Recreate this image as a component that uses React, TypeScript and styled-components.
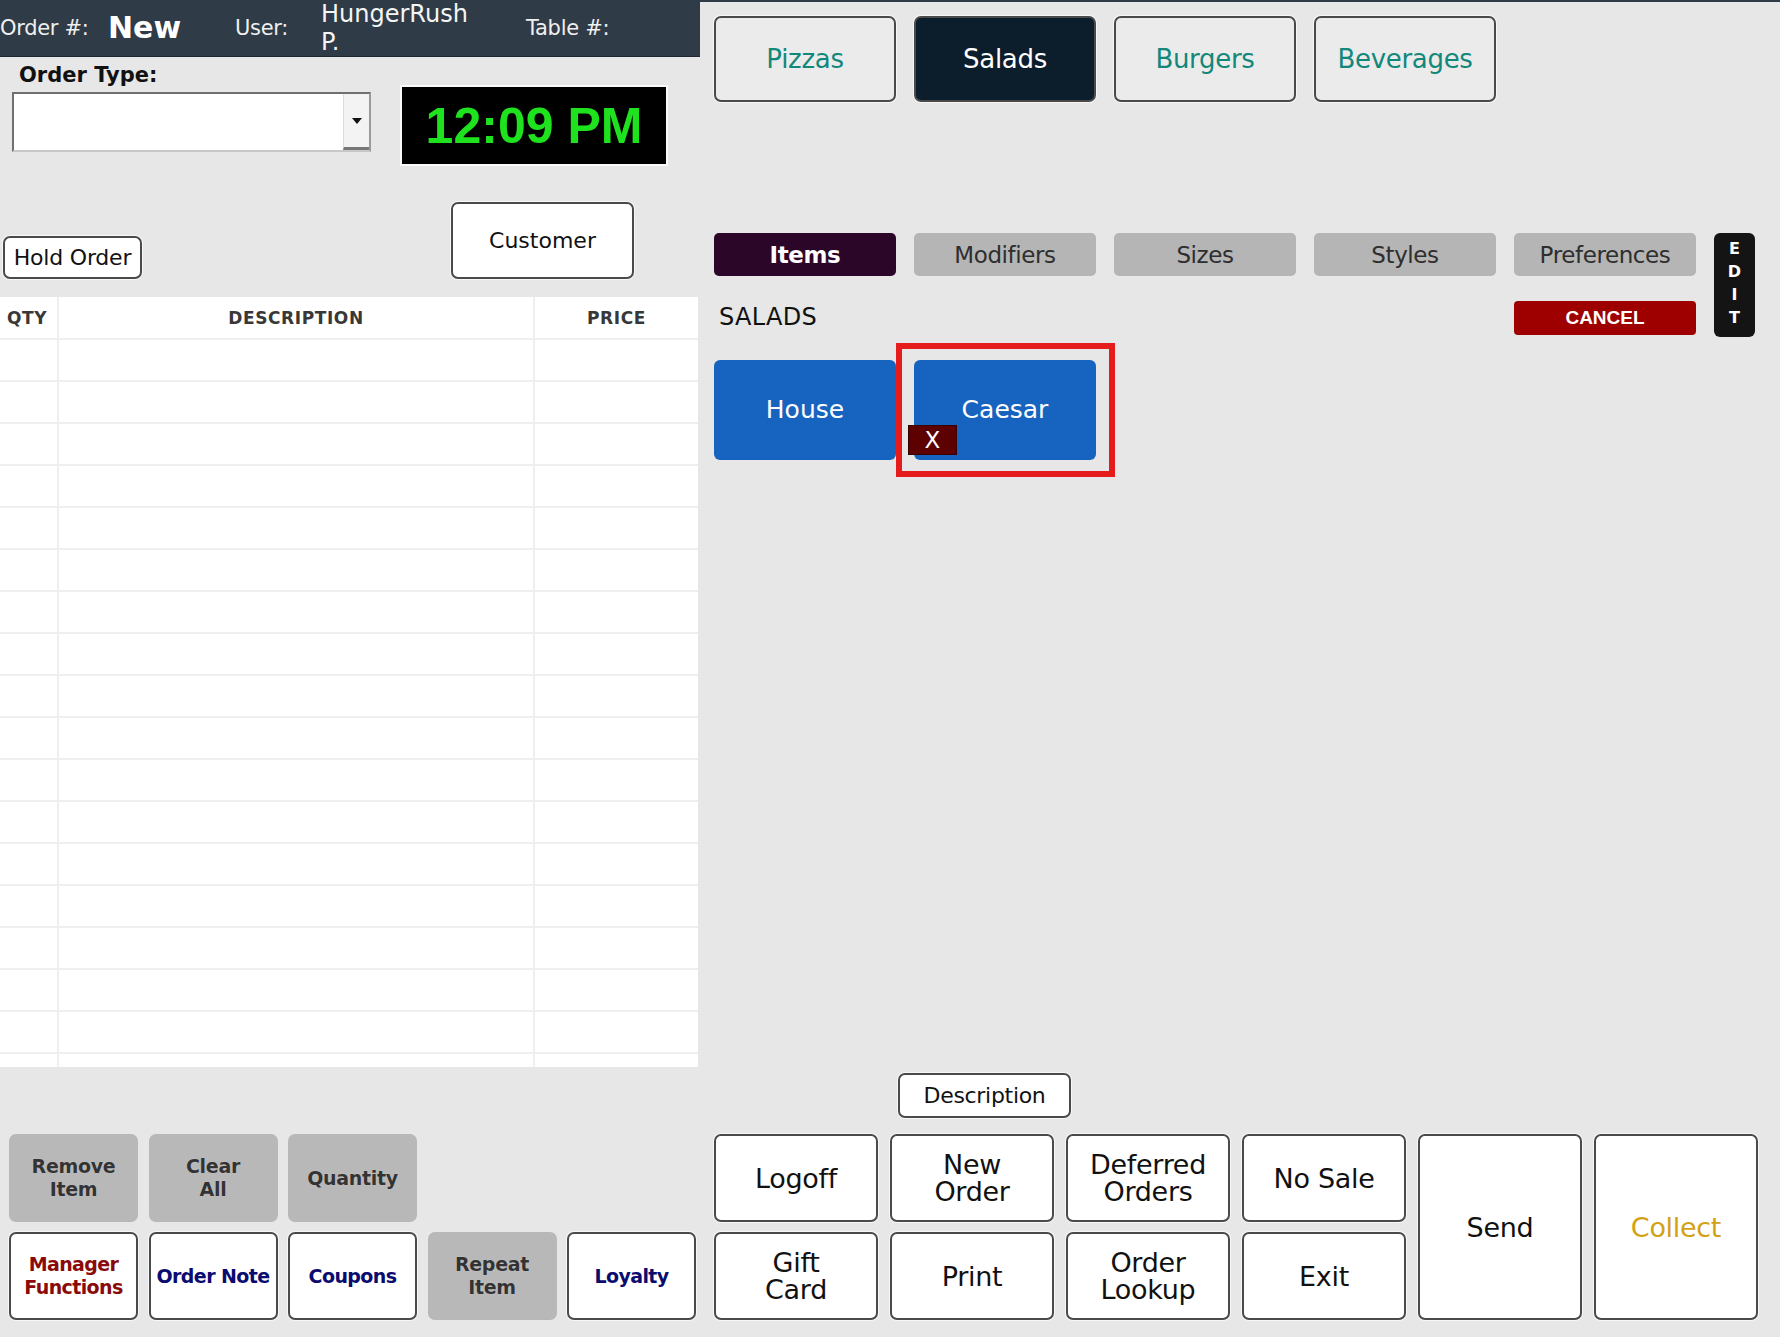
import React from "react";
import styled, { createGlobalStyle, css } from "styled-components";

const SANS = `"DejaVu Sans", "Noto Sans", sans-serif`;

const GlobalStyle = createGlobalStyle`
  html, body {
    margin: 0;
    padding: 0;
    background: #e7e7e7;
  }
  body {
    font-family: ${SANS};
    color: #111;
  }
  * { box-sizing: border-box; }
`;

const categories = [
  { label: "Pizzas" },
  { label: "Salads", active: true },
  { label: "Burgers" },
  { label: "Beverages" },
];

const tabs = [
  { label: "Items", active: true },
  { label: "Modifiers" },
  { label: "Sizes" },
  { label: "Styles" },
  { label: "Preferences" },
];

type Kind = "gray" | "red" | "navy";

const leftButtons: { label: string; kind: Kind; col?: number }[] = [
  { label: "Remove\nItem", kind: "gray" },
  { label: "Clear\nAll", kind: "gray" },
  { label: "Quantity", kind: "gray" },
  { label: "Manager\nFunctions", kind: "red", col: 1 },
  { label: "Order Note", kind: "navy" },
  { label: "Coupons", kind: "navy" },
  { label: "Repeat\nItem", kind: "gray" },
  { label: "Loyalty", kind: "navy" },
];

const actions = [
  "Logoff",
  "New\nOrder",
  "Deferred\nOrders",
  "No Sale",
  "Gift\nCard",
  "Print",
  "Order\nLookup",
  "Exit",
];

const App = () => {
  const rows = Array.from({ length: 19 });
  return (
    <>
      <GlobalStyle />
      <Page>
        <LeftPanel>
          <HeaderBar>
            <HeadLabel>Order #:</HeadLabel>
            <OrderNo>New</OrderNo>
            <HeadLabel>User:</HeadLabel>
            <UserName>
              HungerRush
              <br />
              P.
            </UserName>
            <HeadLabel>Table #:</HeadLabel>
          </HeaderBar>

          <TopForm>
            <FieldLabel>Order Type:</FieldLabel>
            <SelectBox>
              <SelectArrow>
                <svg width="10" height="6" viewBox="0 0 10 6">
                  <path d="M0 0 L10 0 L5 6 Z" fill="#111" />
                </svg>
              </SelectArrow>
            </SelectBox>
            <Clock>12:09 PM</Clock>
          </TopForm>

          <ActionRow>
            <HoldButton>Hold Order</HoldButton>
            <CustomerButton>Customer</CustomerButton>
          </ActionRow>

          <OrderTable>
            <TableRow $head>
              <Cell>QTY</Cell>
              <Cell $center>DESCRIPTION</Cell>
              <Cell $center>PRICE</Cell>
            </TableRow>
            {rows.map((_, i) => (
              <TableRow key={i}>
                <Cell />
                <Cell />
                <Cell />
              </TableRow>
            ))}
          </OrderTable>

          <LeftGrid>
            {leftButtons.map((b) => (
              <LeftButton key={b.label} $kind={b.kind} $col={b.col}>
                {b.label}
              </LeftButton>
            ))}
          </LeftGrid>
        </LeftPanel>

        <RightPanel>
          <CategoryRow>
            {categories.map((c) => (
              <CategoryButton key={c.label} $active={c.active}>
                {c.label}
              </CategoryButton>
            ))}
          </CategoryRow>

          <TabGrid>
            {tabs.map((t) => (
              <TabButton key={t.label} $active={t.active}>
                {t.label}
              </TabButton>
            ))}
            <EditButton>
              <span>E</span>
              <span>D</span>
              <span>I</span>
              <span>T</span>
            </EditButton>
            <SectionTitle>SALADS</SectionTitle>
            <CancelButton>CANCEL</CancelButton>
          </TabGrid>

          <ItemGrid>
            <ItemButton>House</ItemButton>
            <ItemButton $selected>
              Caesar
              <RemoveBadge>X</RemoveBadge>
            </ItemButton>
          </ItemGrid>

          <BottomArea>
            <DescriptionButton>Description</DescriptionButton>
            <ActionGrid>
              {actions.map((a) => (
                <ActionButton key={a}>{a}</ActionButton>
              ))}
              <ActionButton $col={5}>Send</ActionButton>
              <ActionButton $col={6} $gold>
                Collect
              </ActionButton>
            </ActionGrid>
          </BottomArea>
        </RightPanel>
      </Page>
    </>
  );
};

export default App;

const Page = styled.div`
  display: grid;
  grid-template-columns: 700px 1fr;
  width: 1780px;
  height: 1337px;
  overflow: hidden;
  background: #e7e7e7;
`;

const LeftPanel = styled.div`
  display: flex;
  flex-direction: column;
  padding-bottom: 17px;
`;

const HeaderBar = styled.div`
  display: grid;
  grid-template-columns: 108px 127px 86px 205px auto;
  align-items: center;
  height: 57px;
  background: #2f3b46;
  color: #fff;
  overflow: hidden;
  border-bottom: 1px solid #1f2830;
`;

const HeadLabel = styled.span`
  font-size: 21px;
  color: #f0f0f0;
  letter-spacing: -0.3px;
`;

const OrderNo = styled.span`
  font-size: 30px;
  font-weight: bold;
  margin-top: -2px;
`;

const UserName = styled.div`
  align-self: start;
  font-size: 24px;
  line-height: 28px;
  color: #f5f5f5;
  white-space: nowrap;
`;

const TopForm = styled.div`
  display: grid;
  grid-template-columns: 359px 264px;
  grid-template-rows: 26px 60px;
  column-gap: 31px;
  row-gap: 4px;
  padding: 5px 0 0 12px;
`;

const FieldLabel = styled.div`
  grid-column: 1 / 3;
  padding-left: 7px;
  font-size: 21px;
  font-weight: 600;
  line-height: 26px;
`;

const SelectBox = styled.div`
  display: flex;
  justify-content: flex-end;
  background: #fff;
  border: 2px solid #707070;
  border-right-color: #9a9a9a;
  border-bottom-color: #c8c8c8;
`;

const SelectArrow = styled.div`
  display: flex;
  align-items: center;
  justify-content: center;
  width: 26px;
  background: #f3f3f3;
  border-left: 1px solid #dcdcdc;
  border-bottom: 3px solid #777;
`;

const Clock = styled.div`
  align-self: start;
  margin-top: -5px;
  height: 77px;
  display: flex;
  align-items: center;
  justify-content: center;
  background: #000;
  color: #1fe21f;
  font-family: "Liberation Sans", Arial, sans-serif;
  font-weight: bold;
  font-size: 50px;
  outline: 2px solid #fafafa;
`;

const buttonBase = css`
  display: flex;
  align-items: center;
  justify-content: center;
  text-align: center;
  white-space: pre-line;
  background: #fff;
  border: 2px solid #4a4a4a;
  border-radius: 7px;
  box-shadow: 0 0 0 1px #f7f7f7;
`;

const ActionRow = styled.div`
  display: flex;
  align-items: flex-end;
  margin-top: 50px;
  padding-left: 3px;
`;

const HoldButton = styled.div`
  ${buttonBase};
  width: 139px;
  height: 43px;
  font-size: 22px;
  letter-spacing: -0.2px;
`;

const CustomerButton = styled.div`
  ${buttonBase};
  width: 183px;
  height: 77px;
  margin-left: 309px;
  font-size: 22px;
`;

const OrderTable = styled.div`
  margin-top: 18px;
  width: 698px;
  height: 770px;
  overflow: hidden;
  background: #fff;
`;

const TableRow = styled.div<{ $head?: boolean }>`
  display: grid;
  grid-template-columns: 59px 476px 163px;
  height: ${(p) => (p.$head ? "43px" : "42px")};
  border-bottom: 2px solid #efefef;
  font-size: 17px;
  font-weight: bold;
  letter-spacing: 0.6px;
  color: #383838;
`;

const Cell = styled.div<{ $center?: boolean }>`
  display: flex;
  align-items: center;
  justify-content: ${(p) => (p.$center ? "center" : "flex-start")};
  padding-left: ${(p) => (p.$center ? "0" : "7px")};
  border-right: 2px solid #efefef;
  &:last-child {
    border-right: none;
  }
`;

const LeftGrid = styled.div`
  display: grid;
  grid-template-columns: repeat(5, 129px);
  grid-template-rows: 88px 88px;
  column-gap: 10.5px;
  row-gap: 10px;
  margin-top: auto;
  padding-left: 9px;
`;

const kindColor = { gray: "#333", red: "#8a0a0a", navy: "#0b0b70" };

const LeftButton = styled.div<{ $kind: Kind; $col?: number }>`
  ${buttonBase};
  font-size: 19px;
  line-height: 23px;
  font-weight: bold;
  letter-spacing: -0.6px;
  color: ${(p) => kindColor[p.$kind]};
  ${(p) => p.$col && `grid-column: ${p.$col};`}
  ${(p) =>
    p.$kind === "gray" &&
    css`
      background: #b8b8b8;
      border-color: #b8b8b8;
      box-shadow: none;
      font-weight: 600;
      letter-spacing: -0.3px;
      text-shadow: 0 0 1px rgba(255, 255, 255, 0.5);
    `}
`;

const RightPanel = styled.div`
  display: flex;
  flex-direction: column;
  padding: 14px 0 17px 14px;
  border-top: 2px solid #2f3b46;
`;

const CategoryRow = styled.div`
  display: flex;
  gap: 18px;
`;

const CategoryButton = styled.div<{ $active?: boolean }>`
  ${buttonBase};
  width: 182px;
  height: 86px;
  background: ${(p) => (p.$active ? "#0c1d2c" : "#ebebeb")};
  color: ${(p) => (p.$active ? "#fff" : "#12887b")};
  font-size: 26px;
  letter-spacing: -0.3px;
`;

const TabGrid = styled.div`
  display: grid;
  grid-template-columns: repeat(5, 182px) 41px;
  grid-template-rows: 43px 61px;
  column-gap: 18px;
  margin-top: 131px;
`;

const TabButton = styled.div<{ $active?: boolean }>`
  display: flex;
  align-items: center;
  justify-content: center;
  border-radius: 5px;
  background: ${(p) => (p.$active ? "#2c0628" : "#b5b5b5")};
  color: ${(p) => (p.$active ? "#fff" : "#2e2e2e")};
  font-size: 23px;
  letter-spacing: -0.4px;
  font-weight: ${(p) => (p.$active ? "600" : "normal")};
`;

const EditButton = styled.div`
  grid-column: 6;
  grid-row: 1 / 3;
  display: flex;
  flex-direction: column;
  align-items: center;
  justify-content: center;
  background: #141414;
  border-radius: 6px;
  color: #fff;
  font-weight: bold;
  font-size: 16px;
  line-height: 23px;
  padding-bottom: 4px;
`;

const SectionTitle = styled.div`
  grid-column: 1 / 3;
  grid-row: 2;
  align-self: center;
  padding: 20px 0 0 5px;
  font-size: 24px;
  letter-spacing: 0.3px;
`;

const CancelButton = styled.div`
  grid-column: 5;
  grid-row: 2;
  align-self: end;
  height: 34px;
  margin-bottom: 2px;
  display: flex;
  align-items: center;
  justify-content: center;
  background: #9e0000;
  border-radius: 4px;
  color: #fff;
  font-family: "Liberation Sans", Arial, sans-serif;
  font-weight: bold;
  font-size: 19px;
`;

const ItemGrid = styled.div`
  display: flex;
  gap: 18px;
  margin-top: 23px;
`;

const ItemButton = styled.div<{ $selected?: boolean }>`
  position: relative;
  display: flex;
  align-items: center;
  justify-content: center;
  width: 182px;
  height: 100px;
  padding-bottom: 2px;
  background: #1764c0;
  border-radius: 6px;
  color: #fff;
  font-size: 25px;
  ${(p) =>
    p.$selected &&
    css`
      &::after {
        content: "";
        position: absolute;
        inset: -17px -19px -17px -18px;
        border: 6px solid #e51c1c;
      }
    `}
`;

const RemoveBadge = styled.div`
  position: absolute;
  left: -6px;
  top: 65px;
  width: 49px;
  height: 30px;
  display: flex;
  align-items: center;
  justify-content: center;
  background: #5c0000;
  border: 1px solid #3a0000;
  color: #fff;
  font-size: 23px;
`;

const BottomArea = styled.div`
  margin-top: auto;
  display: flex;
  flex-direction: column;
`;

const DescriptionButton = styled.div`
  ${buttonBase};
  width: 173px;
  height: 45px;
  margin-left: 184px;
  margin-bottom: 16px;
  font-size: 22px;
  letter-spacing: -0.3px;
`;

const ActionGrid = styled.div`
  display: grid;
  grid-template-columns: repeat(6, 164px);
  grid-template-rows: 88px 88px;
  column-gap: 12px;
  row-gap: 10px;
`;

const ActionButton = styled.div<{ $col?: number; $gold?: boolean }>`
  ${buttonBase};
  font-size: 27px;
  line-height: 27px;
  letter-spacing: -0.3px;
  color: ${(p) => (p.$gold ? "#d3a114" : "#111")};
  ${(p) =>
    p.$col &&
    css`
      grid-column: ${p.$col};
      grid-row: 1 / 3;
    `}
`;
